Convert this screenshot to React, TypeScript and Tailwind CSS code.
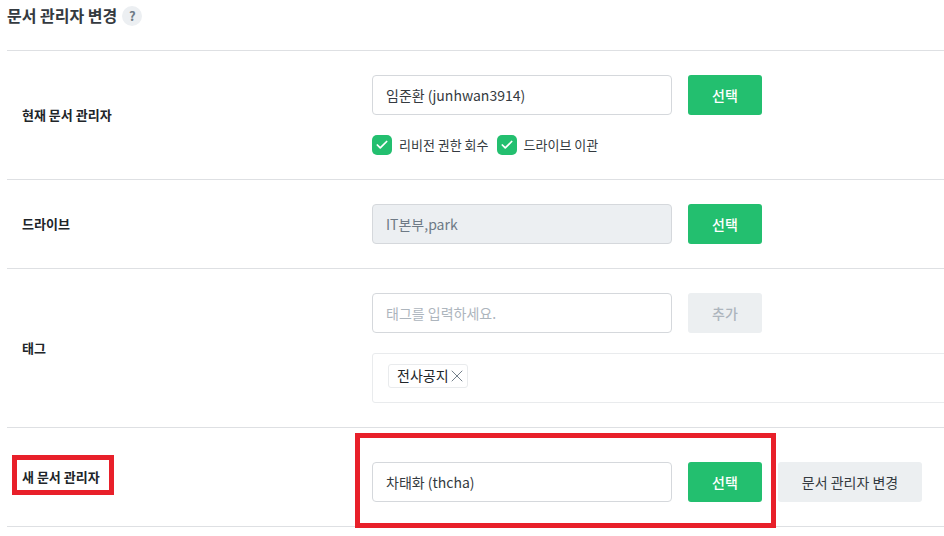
import { Check, X } from 'lucide-react'

const font = { fontFamily: '"Noto Sans CJK KR", "Noto Sans", sans-serif' }

function TextBox({ value, placeholder, disabled }: { value?: string; placeholder?: string; disabled?: boolean }) {
  return (
    <div
      className={`flex h-10 w-[300px] shrink-0 items-center rounded-[4px] border border-[#d5d8dc] px-[13px] text-[14px] ${
        disabled ? 'bg-[#eceff2] text-[#6e7a86]' : 'bg-white text-[#343a40]'
      }`}
    >
      {value ?? <span className="text-[#adb5bd]">{placeholder}</span>}
    </div>
  )
}

function PickButton({ label = '선택', off }: { label?: string; off?: boolean }) {
  return (
    <button
      className={`ml-4 flex h-10 w-[74px] shrink-0 items-center justify-center rounded-[3px] text-[14px] font-medium ${
        off ? 'bg-[#eceff1] text-[#adb5bd]' : 'bg-[#23bf6f] text-white'
      }`}
    >
      {label}
    </button>
  )
}

function CheckItem({ label }: { label: string }) {
  return (
    <div className="flex items-center gap-[7px]">
      <span className="flex h-5 w-5 items-center justify-center rounded-[5px] bg-[#23bf6f]">
        <Check size={14} strokeWidth={3} className="text-white" />
      </span>
      <span className="text-[13px] text-[#343a40]">{label}</span>
    </div>
  )
}

function Row({ label, height, children }: { label: string; height: string; children: React.ReactNode }) {
  return (
    <div className={`flex items-center border-b border-[#dee0e3] ${height}`}>
      <div className="w-[365px] shrink-0 pb-px pl-[15px] text-[13px] font-bold text-[#212529]">{label}</div>
      <div className="min-w-0 flex-1">{children}</div>
    </div>
  )
}

export default function App() {
  return (
    <div className="relative h-[536px] w-[944px] overflow-hidden bg-white pl-[7px]" style={font}>
      <div className="flex h-[51px] items-start border-b border-[#dee0e3] pt-[3px]">
        <h1 className="text-[16px] leading-[24px] font-bold text-[#343a40]">문서 관리자 변경</h1>
        <span className="mt-[3px] ml-[5px] flex h-5 w-5 items-center justify-center rounded-full bg-[#eceff2] text-[13px] font-bold text-[#6e7a86]">
          ?
        </span>
      </div>

      <Row label="현재 문서 관리자" height="h-[129px]">
        <div className="flex">
          <TextBox value="임준환 (junhwan3914)" />
          <PickButton />
        </div>
        <div className="mt-5 flex gap-2">
          <CheckItem label="리비전 권한 회수" />
          <CheckItem label="드라이브 이관" />
        </div>
      </Row>

      <Row label="드라이브" height="h-[89px]">
        <div className="flex">
          <TextBox value="IT본부,park" disabled />
          <PickButton />
        </div>
      </Row>

      <Row label="태그" height="h-[159px]">
        <div className="flex">
          <TextBox placeholder="태그를 입력하세요." />
          <PickButton label="추가" off />
        </div>
        <div className="mt-5 flex h-[50px] w-[600px] items-start rounded-[3px] border border-[#e9ebed] pt-[10px] pl-[15px]">
          <span className="flex h-6 w-[80px] items-center rounded-[3px] border border-[#e9ebed] pb-px pl-2 text-[14px] text-[#212529]">
            전사공지
            <X size={20} strokeWidth={1.15} className="-ml-[2px] text-[#6e7a86]" />
          </span>
        </div>
      </Row>

      <Row label="새 문서 관리자" height="h-[99px]">
        <div className="mt-[10px] flex">
          <TextBox value="차태화 (thcha)" />
          <PickButton />
          <button className="ml-4 flex h-10 w-[144px] shrink-0 items-center justify-center rounded-[3px] bg-[#eceff1] text-[14px] text-[#343a40]">
            문서 관리자 변경
          </button>
        </div>
      </Row>

      {/* red annotation boxes drawn over the screenshot */}
      <div className="absolute top-[455px] left-[12px] h-[40px] w-[102px] border-[5px] border-[#e8202a]" />
      <div className="absolute top-[433px] left-[355px] h-[95px] w-[421px] border-[5px] border-[#e8202a]" />
    </div>
  )
}
